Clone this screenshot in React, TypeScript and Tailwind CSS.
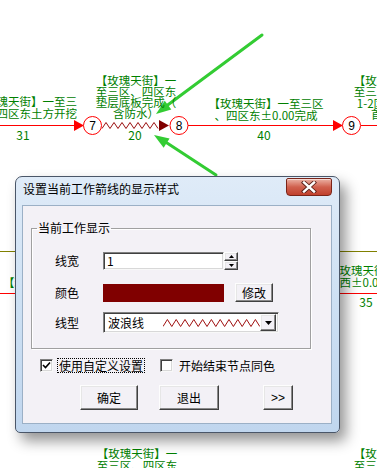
import React from "react";

// zigzag points for the "wave" line style
function zigzag(x0: number, x1: number, y: number, amp: number, step: number) {
  const pts: string[] = [];
  let i = 0;
  for (let x = x0; x <= x1; x += step, i++) pts.push(`${x},${i % 2 ? y - amp : y + amp}`);
  return pts.join(" ");
}

// arrow head polygon: tip + direction back toward the tail
function head(tx: number, ty: number, fx: number, fy: number, len: number, half: number) {
  const dx = fx - tx;
  const dy = fy - ty;
  const l = Math.hypot(dx, dy);
  const ux = dx / l;
  const uy = dy / l;
  const bx = tx + ux * len;
  const by = ty + uy * len;
  return `${tx},${ty} ${bx - uy * half},${by + ux * half} ${bx + uy * half},${by - ux * half}`;
}

function Node({ cx, cy, n }: { cx: number; cy: number; n: string }) {
  return (
    <g>
      <circle cx={cx} cy={cy} r={9} fill="#fff" stroke="#ff0000" strokeWidth={1} />
      <text x={cx} y={cy + 4.5} textAnchor="middle" fontSize="12" fontFamily="Liberation Sans, sans-serif" fill="#000">
        {n}
      </text>
    </g>
  );
}

function Diagram() {
  return (
    <>
      <svg className="absolute inset-0" width={377} height={468}>
        {/* main chain */}
        <line x1={0} y1={125.5} x2={76} y2={125.5} stroke="#ff0000" />
        <polygon points="74,120 84,125.5 74,131" fill="#ff0000" />
        <Node cx={92.5} cy={125.5} n="7" />
        <polyline points={zigzag(102, 160, 125.5, 3, 4)} fill="none" stroke="#9a1010" strokeWidth={1} />
        <polygon points="159,120 169,125.5 159,131" fill="#800000" />
        <Node cx={179} cy={125.5} n="8" />
        <line x1={188} y1={125.5} x2={336} y2={125.5} stroke="#ff0000" />
        <polygon points="333,120 343,125.5 333,131" fill="#ff0000" />
        <Node cx={351.5} cy={125.5} n="9" />
        <line x1={361} y1={125.5} x2={377} y2={125.5} stroke="#ff0000" />

        {/* middle band, mostly under the dialog */}
        <line x1={0} y1={251.5} x2={377} y2={251.5} stroke="#808000" />
        <line x1={0} y1={293.5} x2={377} y2={293.5} stroke="#ff0000" />

        {/* green pointer arrows */}
        <line x1={262} y1={35} x2={165} y2={107} stroke="#33cc33" strokeWidth={3} strokeLinecap="round" />
        <polygon points={head(156, 114, 262, 35, 15, 5.5)} fill="#33cc33" />
        <line x1={216} y1={175} x2={164} y2={141} stroke="#33cc33" strokeWidth={3} strokeLinecap="round" />
        <polygon points={head(154, 135, 216, 175, 15, 5.5)} fill="#33cc33" />
      </svg>

      {/* activity labels */}
      <div className="absolute left-[-40px] top-[96px] w-[117px] text-right text-[11.5px] leading-[11.5px] text-[#008000] whitespace-nowrap">
        <div>【玫瑰天街】一至三</div>
        <div>区、四区东土方开挖</div>
      </div>
      <div className="absolute left-[91px] top-[74.5px] w-[90px] text-center text-[11.5px] leading-[11px] text-[#008000] whitespace-nowrap">
        <div>【玫瑰天街】一</div>
        <div>至三区、四区东</div>
        <div>垫层底板完成（</div>
        <div>含防水）</div>
      </div>
      <div className="absolute left-[196px] top-[96.5px] w-[140px] text-center text-[11.5px] leading-[12.5px] text-[#008000] whitespace-nowrap">
        <div>【玫瑰天街】一至三区</div>
        <div>、四区东±0.00完成</div>
      </div>
      <div className="absolute left-[344px] top-[74.5px] w-[100px] text-center text-[11.5px] leading-[11.5px] text-[#008000] whitespace-nowrap">
        <div>【玫瑰天街】一</div>
        <div>至三区、四区东</div>
        <div>1-2区主体结构</div>
        <div>首层完成</div>
      </div>

      <div className="absolute left-[3px] top-[276px] text-[11.5px] leading-[12px] text-[#008000] whitespace-nowrap">【玫瑰天街】</div>
      <div className="absolute left-[328px] top-[264px] text-[11.5px] leading-[12px] text-[#008000] whitespace-nowrap">
        <div>【玫瑰天街】一至</div>
        <div>区西±0.00完成</div>
      </div>

      {/* durations */}
      <span className="absolute left-[13px] top-[128px] w-[20px] text-center text-[12px] leading-[14px] text-[#008000]">31</span>
      <span className="absolute left-[125px] top-[128px] w-[20px] text-center text-[12px] leading-[14px] text-[#008000]">20</span>
      <span className="absolute left-[254px] top-[128px] w-[20px] text-center text-[12px] leading-[14px] text-[#008000]">40</span>
      <span className="absolute left-[356px] top-[295px] w-[20px] text-center text-[12px] leading-[14px] text-[#008000]">35</span>

      {/* next row, cut at the bottom */}
      <div className="absolute left-[92px] top-[447px] w-[90px] text-center text-[11.5px] leading-[12px] text-[#008000] whitespace-nowrap">
        <div>【玫瑰天街】一</div>
        <div>至三区、四区东</div>
      </div>
      <div className="absolute left-[344px] top-[447px] w-[100px] text-center text-[11.5px] leading-[12px] text-[#008000] whitespace-nowrap">
        <div>【玫瑰天街】一</div>
        <div>至三区、四区东</div>
      </div>
    </>
  );
}

const raised =
  "border border-t-[#fdfdfd] border-l-[#fdfdfd] border-r-[#404040] border-b-[#404040] shadow-[inset_-1px_-1px_0_#8a8a8a,inset_1px_1px_0_#e6e6e6] bg-[#f3f1f6]";
const sunken =
  "border border-t-[#808080] border-l-[#808080] border-r-[#f8f8f8] border-b-[#f8f8f8] shadow-[inset_1px_1px_0_#404040,inset_-1px_-1px_0_#d8d8d8]";

function Check({ checked }: { checked?: boolean }) {
  return (
    <span className={`w-[13px] h-[13px] bg-white flex items-center justify-center ${sunken}`}>
      {checked && (
        <svg width="9" height="9" viewBox="0 0 9 9">
          <path d="M1 4 L3.5 6.5 L8 1.5" fill="none" stroke="#000" strokeWidth="1.6" />
        </svg>
      )}
    </span>
  );
}

function Dialog() {
  return (
    <div className="absolute left-[15px] top-[176px] w-[325px] h-[257px] flex flex-col rounded-t-[7px] rounded-b-[5px] border border-[#4a5668] bg-linear-to-b from-[#dfebf8] via-[#cde0f3] to-[#c0d6ee] shadow-[6px_8px_14px_rgba(0,0,0,0.42)] text-[12px] leading-[14px] text-black">
      <div className="h-[28px] shrink-0 flex justify-between items-start">
        <span className="pl-[7px] pt-[5px]">设置当前工作箭线的显示样式</span>
        <span className="mt-[1px] mr-[7px] w-[46px] h-[18px] rounded-b-[4px] rounded-t-[2px] border border-[#7a2418] bg-linear-to-b from-[#eab1a5] via-[#d0604e] to-[#c0402c] shadow-[inset_0_1px_0_rgba(255,255,255,0.5)] flex items-center justify-center">
          <svg width="16" height="12" viewBox="0 0 16 12">
            <path d="M3 1.5 L13 10.5 M13 1.5 L3 10.5" stroke="#5a2018" strokeWidth="4.2" strokeLinecap="square" />
            <path d="M3 1.5 L13 10.5 M13 1.5 L3 10.5" stroke="#fff" strokeWidth="2.4" strokeLinecap="square" />
          </svg>
        </span>
      </div>

      <div className="flex-1 ml-[6px] mr-[7px] mb-[8px] border border-[#9bb0c6] bg-[#f3f1f6] flex flex-col">
        <fieldset className="ml-[8px] mt-[15px] w-[280px] border border-[#a0a0a0] shadow-[inset_1px_1px_0_#fff,1px_1px_0_#fff] px-0 pt-[17px] pb-[15px]">
          <legend className="ml-[5px] px-[1px] leading-[14px]">当前工作显示</legend>
          <div className="flex flex-col pl-[23px]">
            <div className="flex items-center h-[18px]">
              <span className="w-[48px]">线宽</span>
              <div className={`w-[121px] h-[18px] bg-white pl-[3px] flex items-center ${sunken}`}>1</div>
              <div className="w-[14px] h-[18px] flex flex-col">
                <span className={`h-[9px] flex items-center justify-center ${raised}`}>
                  <svg width="5" height="3"><polygon points="2.5,0 5,3 0,3" fill="#000" /></svg>
                </span>
                <span className={`h-[9px] flex items-center justify-center ${raised}`}>
                  <svg width="5" height="3"><polygon points="0,0 5,0 2.5,3" fill="#000" /></svg>
                </span>
              </div>
            </div>
            <div className="flex items-center h-[19px] mt-[13px]">
              <span className="w-[48px]">颜色</span>
              <div className="w-[121px] h-[18px] bg-[#800000]" />
              <span className={`ml-[11px] w-[38px] h-[19px] flex items-center justify-center ${raised}`}>修改</span>
            </div>
            <div className="flex items-center h-[21px] mt-[10px]">
              <span className="w-[48px]">线型</span>
              <div className={`w-[176px] h-[21px] bg-white flex items-center pl-[4px] pr-[2px] ${sunken}`}>
                <span>波浪线</span>
                <svg width="97" height="10" className="ml-[19px]">
                  <polyline points={zigzag(0, 97, 5, 3.5, 4.4)} fill="none" stroke="#a01010" strokeWidth={1} />
                </svg>
                <span className={`ml-auto w-[16px] h-[17px] flex items-center justify-center ${raised}`}>
                  <svg width="7" height="4"><polygon points="0,0 7,0 3.5,4" fill="#000" /></svg>
                </span>
              </div>
            </div>
          </div>
        </fieldset>

        <div className="flex items-center h-[15px] mt-[9px] pl-[17px]">
          <Check checked />
          <span className="ml-[4px] px-[1px] h-[15px] flex items-center border border-dotted border-black">使用自定义设置</span>
          <span className="ml-[15px]">
            <Check />
          </span>
          <span className="ml-[6px]">开始结束节点同色</span>
        </div>

        <div className="flex items-center mt-[12px] pl-[57px]">
          <span className={`w-[58px] h-[25px] flex items-center justify-center ${raised}`}>确定</span>
          <span className={`ml-[21px] w-[60px] h-[25px] flex items-center justify-center ${raised}`}>退出</span>
          <span className={`ml-[44px] w-[30px] h-[25px] flex items-center justify-center font-['Liberation_Sans',sans-serif] ${raised}`}>
            &gt;&gt;
          </span>
        </div>
      </div>
    </div>
  );
}

export default function App() {
  return (
    <div className="relative w-[377px] h-[468px] overflow-hidden bg-white font-['Noto_Sans_CJK_SC',sans-serif]">
      <Diagram />
      <Dialog />
    </div>
  );
}
